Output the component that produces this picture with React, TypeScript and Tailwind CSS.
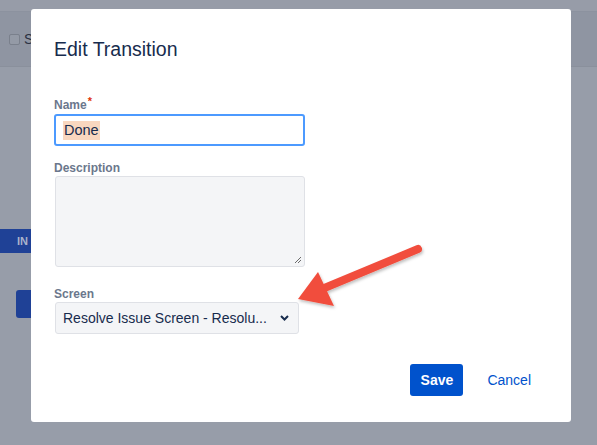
import React from "react";

export default function App() {
  const font = { fontFamily: '"Liberation Sans", Arial, sans-serif' };
  return (
    <div className="relative w-[597px] h-[445px] overflow-hidden bg-[#979da9]" style={font}>
      {/* background page under overlay */}
      <div className="flex flex-col">
        <div className="h-[12px] bg-[#979ca8] border-b border-[#8c929f]" />
        <div className="h-[55px] bg-[#8f95a2] border-b border-[#8a909c] flex items-center pl-[9px] gap-[4px]">
          <div className="w-[11px] h-[11px] border border-[#7a808c] rounded-[2px] bg-[#949aa6]" />
          <span className="text-[14px] text-[#2a3142]">S</span>
        </div>
        <div className="h-[162px]" />
        <div className="w-[31px] h-[24px] bg-[#1f4196] flex items-center pl-[17px]">
          <span className="text-[11px] font-bold text-[#a9b3cb]">IN</span>
        </div>
        <div className="h-[37px]" />
        <div className="ml-[16px] w-[20px] h-[28px] rounded-[3px] bg-[#1f4196]" />
      </div>

      {/* modal */}
      <div className="absolute left-[31px] top-[9px] w-[540px] h-[413px] bg-white rounded-[3px] px-[23px]">
        <h1 className="mt-[28px] text-[19.5px] leading-[24px] text-[#172b4d] font-normal">Edit Transition</h1>

        <div className="mt-[36px] flex text-[12px] leading-[16px] font-bold text-[#6b778c]">
          Name<span className="text-[#de350b] text-[11px] -mt-[4px] ml-[1px]">*</span>
        </div>
        <div className="mt-[1px] w-[251px] h-[32px] border-2 border-[#4c9aff] rounded-[3px] flex items-center pl-[7px]">
          <span className="text-[14.5px] leading-[19px] text-[#172b4d] bg-[#f9d7bf] px-[1px]">Done</span>
        </div>

        <div className="mt-[14px] text-[12px] leading-[16px] font-bold text-[#6b778c]">Description</div>
        <div className="relative ml-[1px] w-[250px] h-[91px] bg-[#f4f5f7] border border-[#dfe1e6] rounded-[3px]">
          <svg className="absolute right-[2px] bottom-[2px]" width="8" height="8" viewBox="0 0 8 8">
            <path d="M7 1 L1 7 M7 4 L4 7" stroke="#6b6b6b" strokeWidth="1" />
          </svg>
        </div>

        <div className="mt-[19px] text-[12px] leading-[16px] font-bold text-[#6b778c]">Screen</div>
        <div className="ml-[1px] w-[244px] h-[32px] bg-[#f4f5f7] border border-[#dfe1e6] rounded-[3px] flex items-center justify-between pl-[7px] pr-[9px]">
          <span className="text-[14px] text-[#172b4d]">Resolve Issue Screen - Resolu...</span>
          <svg width="9" height="6" viewBox="0 0 9 6">
            <path d="M1 1 L4.5 4.5 L8 1" fill="none" stroke="#172b4d" strokeWidth="2" />
          </svg>
        </div>

        <div className="absolute right-[40px] bottom-[26px] flex items-center gap-[24px]">
          <button className="w-[53px] h-[32px] rounded-[3px] bg-[#0052cc] text-white text-[14px] font-bold">Save</button>
          <span className="text-[14px] text-[#0052cc]">Cancel</span>
        </div>
      </div>

      {/* red arrow annotation */}
      <svg className="absolute left-0 top-0 pointer-events-none" width="597" height="445" viewBox="0 0 597 445">
        <defs>
          <filter id="sh" x="-20%" y="-20%" width="140%" height="140%">
            <feDropShadow dx="1" dy="2" stdDeviation="1.5" floodColor="#000" floodOpacity="0.25" />
          </filter>
        </defs>
        <g filter="url(#sh)">
          <line x1="418" y1="249" x2="322" y2="289" stroke="#f14e3d" strokeWidth="8" strokeLinecap="round" />
          <polygon points="298,299 318,272 334,306" fill="#f14e3d" />
        </g>
      </svg>
    </div>
  );
}
